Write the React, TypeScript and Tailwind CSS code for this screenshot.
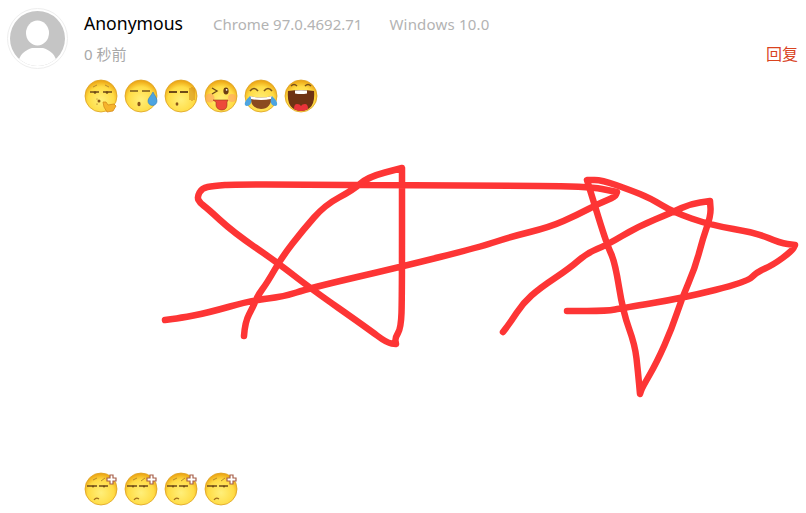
import { useId, type ReactNode } from 'react'

// corners are listed twice so the smoothing keeps them sharp
const stroke1 =
  '244,336 245,322 253,307 258,295 267,283 282,257 303,230 325,205 353,190 368,177 402,168 402,168 402,298 401,328 395,338 396,344 396,344 387,343 367,328 310,288 278,263 233,232 207,208 200,203 197,197 202,188 213,186 237,184 490,186 587,186 617,192 617,192 615,197 600,203 577,215 550,227 510,237 480,247 400,267 310,288 283,297 253,300 207,313 180,318 165,320'
const stroke2 =
  '503,332 510,323 523,303 540,288 570,268 587,253 607,245 637,227 673,212 690,204 710,201 710,201 711,215 703,238 695,268 682,298 672,328 657,362 642,388 640,394 640,394 638,372 635,345 623,312 615,262 607,245 590,190 587,180 587,180 602,180 630,190 650,198 673,212 710,225 757,233 780,243 795,245 795,245 792,251 773,265 757,272 747,282 683,298 623,308 607,311 567,311'

function smooth(points: string) {
  const pts = points.split(' ').map(p => p.split(',').map(Number))
  let d = `M${pts[0][0]} ${pts[0][1]}`
  for (let i = 1; i < pts.length - 1; i++) {
    const mx = (pts[i][0] + pts[i + 1][0]) / 2
    const my = (pts[i][1] + pts[i + 1][1]) / 2
    d += `Q${pts[i][0]} ${pts[i][1]} ${mx} ${my}`
  }
  const last = pts[pts.length - 1]
  return `${d}L${last[0]} ${last[1]}`
}

function Face({ children }: { children: ReactNode }) {
  const id = useId()
  return (
    <svg viewBox="0 0 34 34" className="h-[34px] w-[34px] shrink-0">
      <defs>
        <radialGradient id={id} cx="50%" cy="62%" r="58%">
          <stop offset="0%" stopColor="#ffef7a" />
          <stop offset="70%" stopColor="#ffdc45" />
          <stop offset="100%" stopColor="#eeaa18" />
        </radialGradient>
      </defs>
      <circle cx="17" cy="17" r="16" fill={`url(#${id})`} stroke="#dda222" strokeWidth="0.8" />
      {children}
    </svg>
  )
}

const Shush = () => (
  <Face>
    <path d="M9 8l4-2M25 8l-4-2" stroke="#b98a2c" strokeWidth="1" fill="none" />
    <path d="M6 13h9M19 13h9" stroke="#6e4a18" strokeWidth="1.6" />
    <circle cx="11" cy="13.5" r="1.3" fill="#6e4a18" />
    <circle cx="23" cy="13.5" r="1.3" fill="#6e4a18" />
    <circle cx="15" cy="22" r="1.5" fill="#8a5518" />
    <circle cx="13" cy="20" r="0.5" fill="#8a5518" />
    <circle cx="13" cy="25" r="0.6" fill="#8a5518" />
    <path d="M19 23l3 0 2 3 6-1 2 2-3 5-6 1-3-5z" fill="#f6b42c" stroke="#d68a1a" strokeWidth="0.8" />
  </Face>
)

const Sweat = () => (
  <Face>
    <path d="M6 12h8M18 12h8" stroke="#7a5a1e" strokeWidth="1.5" />
    <ellipse cx="15" cy="25" rx="1.6" ry="2.2" fill="#8a5518" />
    <path d="M29 13c2 4 4 6 4 9a4 4 0 0 1-9 0c0-3 3-5 5-9z" fill="#4da4e0" stroke="#2f7fc0" strokeWidth="0.6" />
  </Face>
)

const Blank = () => (
  <Face>
    <path d="M5 13h8M16 13h8" stroke="#6e4a18" strokeWidth="1.8" />
    <ellipse cx="13" cy="25" rx="1.4" ry="1.8" fill="#8a5518" />
    <path d="M26 9v12M28 8v14M30 9v12" stroke="#d08c1c" strokeWidth="1.1" />
  </Face>
)

const Wink = () => (
  <Face>
    <circle cx="6" cy="19" r="4.5" fill="#ff9a6a" opacity="0.55" />
    <circle cx="28" cy="19" r="4" fill="#ff9a6a" opacity="0.55" />
    <path d="M8 9l5 3-5 3" stroke="#6e4a18" strokeWidth="1.4" fill="none" />
    <ellipse cx="22" cy="12" rx="2.6" ry="3.4" fill="#6a3c14" />
    <circle cx="22.6" cy="10.8" r="0.9" fill="#fff" />
    <path d="M9 21h15l-1 2v3c0 3-2 5-5 5s-6-2-6-5v-3z" fill="#ed4a3a" stroke="#9a3a18" strokeWidth="0.6" />
  </Face>
)

const Laugh = () => (
  <Face>
    <path d="M6 12q4-5 8 0M20 12q4-5 8 0" stroke="#7a5218" strokeWidth="1.6" fill="none" />
    <path d="M6 17q11 3 22 0q-1 13-11 13T6 17z" fill="#8a4a20" />
    <path d="M6 17q11 3 22 0l-1 3q-10 2-20 0z" fill="#fff" />
    <path d="M6 17c-3 3-6 6-5 9 1 2 5 1 6-2 1-2 0-5-1-7z" fill="#4da4e0" />
    <path d="M28 17c3 3 6 6 5 9-1 2-5 1-6-2-1-2 0-5 1-7z" fill="#4da4e0" />
  </Face>
)

const Roar = () => (
  <Face>
    <path d="M7 7q3-3 6 0M21 7q3-3 6 0" stroke="#7a5218" strokeWidth="1.5" fill="none" />
    <path d="M4 12q13-2 26 0 2 19-13 20Q2 31 4 12z" fill="#6e3214" />
    <path d="M11 11.5q6-.7 12 0v3q-6 1-12 0z" fill="#fff" />
    <path d="M10 30q0-5 3-5 3 0 4 2 1-2 4-2 3 0 3 5-3 2-7 2t-7-2z" fill="#e8333a" />
  </Face>
)

const Sore = () => (
  <Face>
    <path d="M9 8l4-2M17 9l4-3" stroke="#b98a2c" strokeWidth="1" fill="none" />
    <path d="M3 14h10M15 14h9" stroke="#6e4a18" strokeWidth="1.4" />
    <circle cx="9" cy="14.5" r="1" fill="#6e4a18" />
    <circle cx="20" cy="14.5" r="1" fill="#6e4a18" />
    <path d="M10 28q2-3 5-1" stroke="#a06a1c" strokeWidth="1.2" fill="none" />
    <path d="M26 3h3v3h3v3h-3v3h-3V9h-3V6h3z" fill="#fff" stroke="#a8604a" strokeWidth="1.2" />
  </Face>
)

export default function App() {
  return (
    <div className="h-[513px] w-[806px] overflow-hidden bg-white font-['Noto_Sans','Noto_Sans_CJK_SC',sans-serif]">
      <div className="flex pl-[7px] pt-[8px]">
        {/* Avatar */}
        <div className="flex h-[61px] w-[61px] shrink-0 items-center justify-center rounded-full border border-[#eeeeee]">
          <svg viewBox="0 0 55 55" className="h-[55px] w-[55px]">
            <defs>
              <clipPath id="avatar-clip">
                <circle cx="27.5" cy="27.5" r="27.5" />
              </clipPath>
            </defs>
            <circle cx="27.5" cy="27.5" r="27.5" fill="#c5c5c5" />
            <g clipPath="url(#avatar-clip)" fill="#ffffff">
              <ellipse cx="27.5" cy="22" rx="11.5" ry="12.5" />
              <path d="M8 55c0-12 8-16 14-18h11c6 2 14 6 14 18z" />
            </g>
          </svg>
        </div>

        <div className="ml-[16px] min-w-0 flex-1">
          <div className="flex h-[32px] items-baseline">
            <span className="text-[17.6px] leading-[31px] text-black">Anonymous</span>
            <span className="ml-[30px] text-[15px] text-[#b3b3b3]">Chrome 97.0.4692.71</span>
            <span className="ml-[27px] text-[15px] tracking-[0.2px] text-[#b3b3b3]">Windows 10.0</span>
          </div>
          <div className="flex h-[30px] items-center justify-between pr-[8px]">
            <span className="-mt-[3px] text-[15px] leading-[30px] text-[#a8a8a8]">0 秒前</span>
            <span className="-mt-[2px] text-[16px] leading-[30px] text-[#d9431f]">回复</span>
          </div>
          <div className="mt-[9px] flex gap-[6px]">
            <Shush />
            <Sweat />
            <Blank />
            <Wink />
            <Laugh />
            <Roar />
          </div>
          {/* Hand-drawn picture in the comment */}
          <svg viewBox="84 113 722 359" className="block h-[359px] w-[722px]">
            <g fill="none" stroke="#fd3535" strokeWidth="6.5" strokeLinecap="round" strokeLinejoin="round">
              <path d={smooth(stroke1)} />
              <path d={smooth(stroke2)} />
            </g>
          </svg>
          <div className="flex gap-[6px]">
            <Sore />
            <Sore />
            <Sore />
            <Sore />
          </div>
        </div>
      </div>
    </div>
  )
}
